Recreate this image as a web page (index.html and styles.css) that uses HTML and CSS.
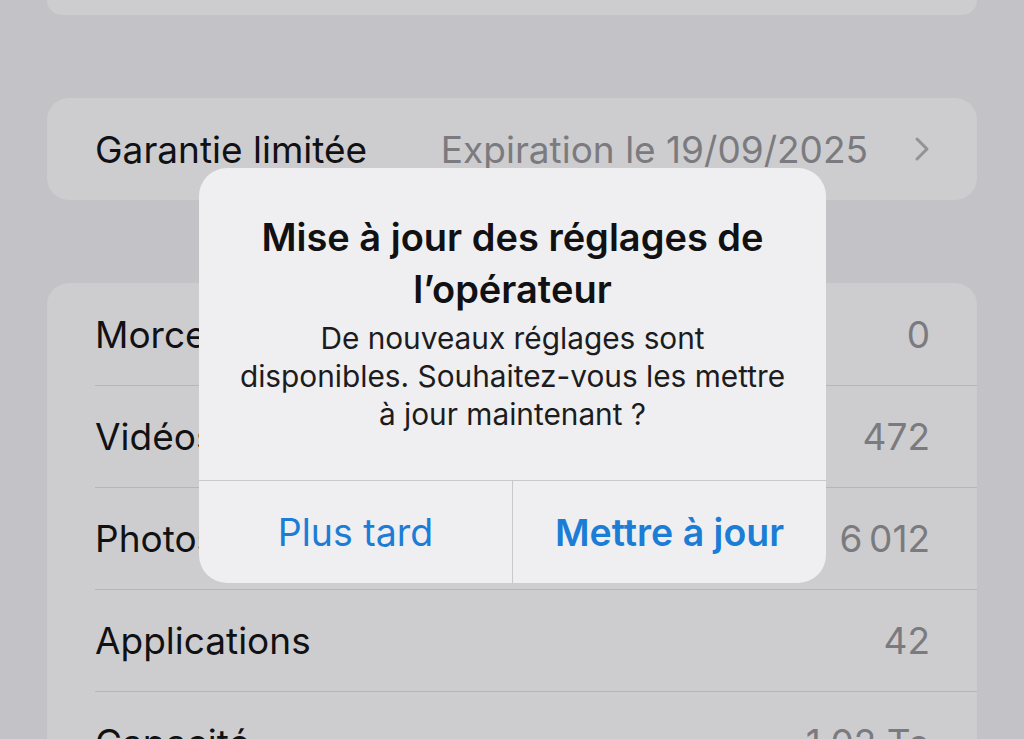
FILE: index.html
```html
<!DOCTYPE html>
<html lang="fr">
<head>
    <meta charset="UTF-8">
    <title>Informations</title>
    <link rel="stylesheet" href="styles.css">
</head>
<body>
    <div class="page">
        <div class="card card-top"></div>

        <div class="card">
            <div class="row">
                <span class="label">Garantie limitée</span>
                <span class="value">Expiration le 19/09/2025</span>
                <svg class="chevron" width="16" height="26" viewBox="0 0 16 26">
                    <path d="M3 3 L13 13 L3 23" fill="none" stroke="#939397" stroke-width="3" stroke-linecap="round" stroke-linejoin="round"/>
                </svg>
            </div>
        </div>

        <div class="card">
            <div class="row">
                <span class="label">Morceaux</span>
                <span class="value">0</span>
            </div>
            <div class="row">
                <span class="label">Vidéos</span>
                <span class="value">472</span>
            </div>
            <div class="row">
                <span class="label">Photos</span>
                <span class="value">6&#8201;012</span>
            </div>
            <div class="row">
                <span class="label">Applications</span>
                <span class="value">42</span>
            </div>
            <div class="row">
                <span class="label">Capacité</span>
                <span class="value">1,02 To</span>
            </div>
        </div>
    </div>

    <div class="alert">
        <div class="alert-body">
            <h2 class="alert-title">Mise à jour des réglages de l’opérateur</h2>
            <p class="alert-text">De nouveaux réglages sont<br>disponibles. Souhaitez-vous les mettre<br>à jour maintenant ?</p>
        </div>
        <div class="alert-actions">
            <div class="action">Plus tard</div>
            <div class="action action-main">Mettre à jour</div>
        </div>
    </div>
</body>
</html>
```

FILE: styles.css
```css
*{
    margin: 0;
    padding: 0;
    box-sizing: border-box;
}
html, body{
    height: 100%;
    overflow: hidden;
}
body{
    background: #c3c2c7;
    font-family: "Inter", "Noto Sans", sans-serif;
    color: #111113;
    position: relative;
}
.page{
    padding: 0 47px;
    display: flex;
    flex-direction: column;
    gap: 83px;
}
.card{
    background: #cdcdcf;
    border-radius: 22px;
    overflow: hidden;
}
.card-top{
    height: 15px;
    border-radius: 0 0 22px 22px;
}
.row{
    height: 102px;
    margin-left: 48px;
    padding-right: 47px;
    display: flex;
    align-items: center;
    font-size: 37px;
    border-top: 1.5px solid #b6b6b9;
}
.row:first-child{
    border-top: none;
}
.label{
    flex: 1;
}
.value{
    color: #7b7b7f;
}
.chevron{
    margin-left: 46px;
}

.alert{
    position: absolute;
    left: 199px;
    top: 168px;
    width: 627px;
    height: 415px;
    background: #efeff1;
    border-radius: 28px;
    display: flex;
    flex-direction: column;
    text-align: center;
}
.alert-body{
    flex: 1;
    padding: 43px 30px 0;
}
.alert-title{
    font-size: 38px;
    font-weight: 600;
    line-height: 52px;
}
.alert-text{
    font-size: 29.8px;
    line-height: 38px;
    margin-top: 4px;
    color: #1c1c1e;
    white-space: nowrap;
}
.alert-actions{
    height: 103px;
    display: flex;
    border-top: 1.5px solid #c9c9cc;
}
.action{
    flex: 1;
    display: flex;
    align-items: center;
    justify-content: center;
    font-size: 37.5px;
    color: #1c7dd6;
}
.action + .action{
    border-left: 1.5px solid #c9c9cc;
}
.action-main{
    font-weight: 600;
}
```
